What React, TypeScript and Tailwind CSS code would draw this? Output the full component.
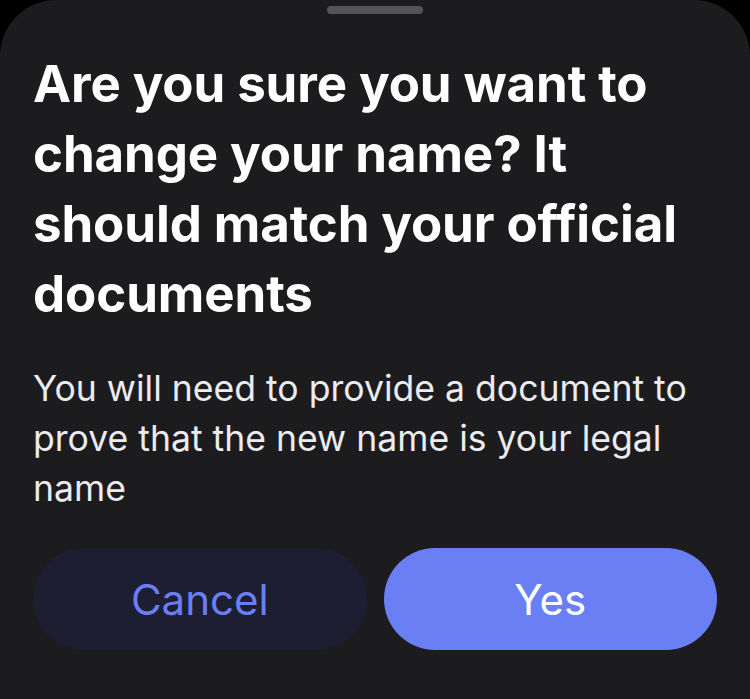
const App = () => {
  return (
    <div className="w-[750px] h-[699px] bg-black overflow-hidden" style={{ fontFamily: "Inter, 'Noto Sans', sans-serif" }}>
      <div className="h-full w-full bg-[#1c1c1e] rounded-t-[56px] flex flex-col px-[33px]">
        <div className="flex justify-center pt-[6px]">
          <div className="w-[96px] h-[8px] rounded-full bg-[#545457]" />
        </div>
        <h1 className="mt-[35px] text-[51px] leading-[70px] font-bold text-white tracking-[-0.1px]">
          Are you sure you want to change your name? It should match your official documents
        </h1>
        <p className="mt-[35px] text-[35.6px] leading-[50px] text-[#ebebf0]">
          You will need to provide a document to prove that the new name is your legal name
        </p>
        <div className="mt-[34px] flex gap-[17px]">
          <button className="flex-1 h-[102px] rounded-full bg-[#1e1e33] text-[#6b7ff5] text-[42px]">
            Cancel
          </button>
          <button className="flex-1 h-[102px] rounded-full bg-[#6b7ff5] text-white text-[42px]">
            Yes
          </button>
        </div>
      </div>
    </div>
  );
};

export default App;
